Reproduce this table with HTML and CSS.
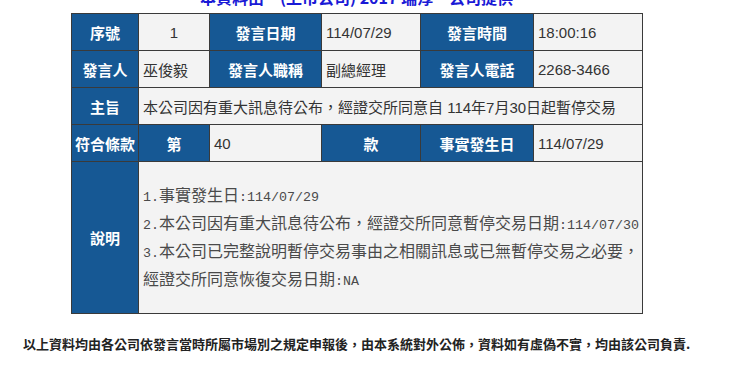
FILE: index.html
```html
<!DOCTYPE html>
<html lang="zh-Hant">
<head>
<meta charset="utf-8">
<title>重大訊息</title>
<link rel="stylesheet" href="styles.css">
</head>
<body>
<div class="page">
  <div class="title">本資料由　(上市公司) 2017 瑞淳　公司提供</div>
  <table class="info">
    <colgroup>
      <col class="c1"><col class="c2"><col class="c3"><col class="c4"><col class="c5"><col class="c6">
    </colgroup>
    <tr class="row">
      <th>序號</th>
      <td class="center">1</td>
      <th>發言日期</th>
      <td>114/07/29</td>
      <th>發言時間</th>
      <td>18:00:16</td>
    </tr>
    <tr class="row">
      <th>發言人</th>
      <td>巫俊毅</td>
      <th>發言人職稱</th>
      <td>副總經理</td>
      <th>發言人電話</th>
      <td>2268-3466</td>
    </tr>
    <tr class="row">
      <th>主旨</th>
      <td colspan="5">本公司因有重大訊息待公布，經證交所同意自 114年7月30日起暫停交易</td>
    </tr>
    <tr class="row">
      <th>符合條款</th>
      <th>第</th>
      <td>40</td>
      <th>款</th>
      <th>事實發生日</th>
      <td>114/07/29</td>
    </tr>
    <tr class="row-desc">
      <th>說明</th>
      <td colspan="5" class="desc"><div class="desc-text"><div class="line"><span class="half">1.</span>事實發生日<span class="half">:114/07/29</span></div><div class="line"><span class="half">2.</span>本公司因有重大訊息待公布，經證交所同意暫停交易日期<span class="half">:114/07/30</span></div><div class="line"><span class="half">3.</span>本公司已完整說明暫停交易事由之相關訊息或已無暫停交易之必要，</div><div class="line">經證交所同意恢復交易日期<span class="half">:NA</span></div></div></td>
    </tr>
  </table>
  <p class="note">以上資料均由各公司依發言當時所屬市場別之規定申報後，由本系統對外公佈，資料如有虛偽不實，均由該公司負責.</p>
</div>
</body>
</html>
```
FILE: styles.css
```css
html, body {
  margin: 0;
  padding: 0;
  background: #ffffff;
}

.page {
  width: 713px;
  font-family: "Liberation Sans", "Noto Sans CJK TC", sans-serif;
}

.title {
  margin-top: -12px;
  height: 18px;
  line-height: 18px;
  text-align: center;
  font-family: "Noto Sans CJK TC", sans-serif;
  font-size: 16px;
  font-weight: bold;
  color: #1a1ad6;
  white-space: nowrap;
}

.info {
  margin: 7px 0 0 71px;
  width: 571px;
  border-collapse: collapse;
  table-layout: fixed;
  border: 1px solid #333333;
}

.c1 { width: 67px; }
.c2 { width: 71px; }
.c3 { width: 112px; }
.c4 { width: 99px; }
.c5 { width: 113px; }
.c6 { width: 109px; }

.row { height: 37px; }
.row-desc { height: 152px; }

.info th,
.info td {
  border: 1px solid #3a3a3a;
  padding: 0 4px;
  font-size: 15px;
  white-space: nowrap;
  overflow: hidden;
}

.info th {
  background: #165894;
  color: #ffffff;
  font-family: "Noto Sans CJK TC", sans-serif;
  font-weight: bold;
  text-align: center;
  padding: 0;
}

.info td {
  background: #f3f3f3;
  color: #333333;
  text-align: left;
}

.info td.center {
  text-align: center;
}

.desc {
  vertical-align: middle;
}

.desc-text {
  display: flex;
  flex-direction: column;
  gap: 6px;
  padding-bottom: 4px;
  font-family: "Noto Sans CJK TC", sans-serif;
  font-size: 16px;
  color: #4a4a4a;
}

.line {
  height: 22px;
  line-height: 22px;
  white-space: pre;
}

.half {
  font-family: "Liberation Mono", monospace;
  font-size: 13.33px;
  line-height: 1;
}

.note {
  margin: 20px 0 0 23px;
  font-family: "Noto Sans CJK TC", sans-serif;
  font-size: 13px;
  font-weight: bold;
  color: #222222;
  white-space: nowrap;
}
```
